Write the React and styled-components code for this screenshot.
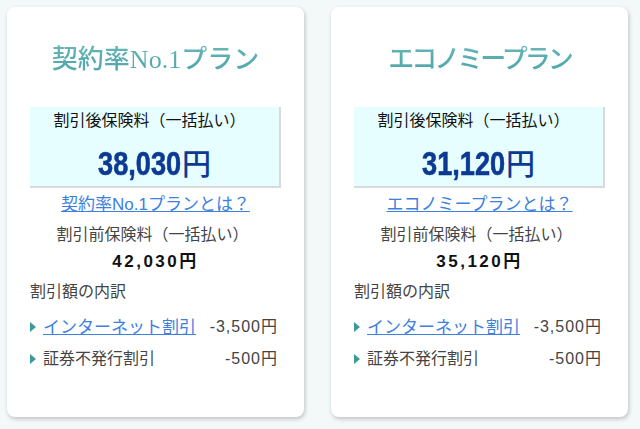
import React from "react";
import styled, { createGlobalStyle } from "styled-components";

const GlobalStyle = createGlobalStyle`
    body {
        margin: 0;
        background: #f3f8f8;
        font-family: "Liberation Sans", "Noto Sans CJK JP", sans-serif;
    }
`

const Page = styled.div`
    display: flex;
    gap: 27px;
    padding: 7px;
`

const Card = styled.div`
    width: 297px;
    height: 410px;
    box-sizing: border-box;
    padding: 0 23px;
    background: #fff;
    border-radius: 8px;
    box-shadow: 1px 2px 4px rgba(0, 0, 0, 0.22);
    display: flex;
    flex-direction: column;
`

const Title = styled.h2`
    margin: 0;
    padding: 40px 0 34px;
    text-align: center;
    font-family: "Liberation Serif", "Noto Sans CJK JP", serif;
    font-weight: 500;
    font-size: 26px;
    line-height: 26px;
    letter-spacing: ${(p) => (p.$tight ? "-3px" : "0")};
    background: linear-gradient(180deg, #9ad6d6 0%, #5aadb0 50%, #3f9a9e 100%);
    -webkit-background-clip: text;
    background-clip: text;
    color: transparent;
`

const PriceBox = styled.div`
    background: #e6feff;
    border-right: 2px solid #dadada;
    border-bottom: 2px solid #dadada;
    padding: 2px 0 6px;
    text-align: center;
`

const BoxLabel = styled.div`
    font-size: 16px;
    line-height: 24px;
    color: #111;
    padding-right: 10px;
`

const Price = styled.div`
    margin-top: 11px;
    height: 36px;
    display: flex;
    justify-content: center;
    align-items: baseline;
    color: #0c3a92;
`

// narrow, heavy figures: squeeze regular bold digits
const Digits = styled.span`
    display: inline-block;
    font-family: "Liberation Sans", sans-serif;
    font-weight: 700;
    font-size: 34px;
    line-height: 36px;
    -webkit-text-stroke: 0.6px #0c3a92;
    transform: scaleX(0.8);
    transform-origin: left center;
    margin-right: -20px;
`

const Yen = styled.span`
    font-family: "Noto Sans CJK JP", sans-serif;
    font-weight: 500;
    font-size: 29px;
    line-height: 36px;
`

const PlanLink = styled.a`
    display: block;
    margin-top: 2px;
    text-align: center;
    font-size: 17px;
    line-height: 30px;
    color: #3d80e0;
    text-decoration: underline;
`

const Label = styled.div`
    text-align: center;
    font-size: 16px;
    line-height: 30px;
    color: #444;
    padding-right: 6px;
`

const Regular = styled.div`
    text-align: center;
    font-weight: 700;
    font-size: 17px;
    letter-spacing: 2.5px;
    line-height: 24px;
    color: #111;
`

const Section = styled.div`
    margin-top: 3px;
    font-size: 16px;
    line-height: 30px;
    color: #444;
`

const Rows = styled.div`
    margin-top: 2px;
`

const Row = styled.div`
    display: flex;
    align-items: center;
    height: 32px;
    padding-right: 3px;
`

const Marker = styled.span`
    width: 0;
    height: 0;
    border-left: 6px solid #3a9a9a;
    border-top: 5px solid transparent;
    border-bottom: 5px solid transparent;
    margin-right: 7px;
    margin-top: 3px;
`

const RowName = styled.a`
    flex: 1;
    font-size: ${(p) => (p.$link ? "17px" : "16px")};
    color: ${(p) => (p.$link ? "#3d80e0" : "#444")};
    text-decoration: ${(p) => (p.$link ? "underline" : "none")};
`

const Amount = styled.span`
    font-size: 16px;
    letter-spacing: 1px;
    color: #444;
`

const plans = [
    { name: "契約率No.1プラン", tight: false, price: "38,030", regular: "42,030円" },
    { name: "エコノミープラン", tight: true, price: "31,120", regular: "35,120円" },
]

function PlanCard({ plan }) {
    return (
        <Card>
            <Title $tight={plan.tight}>{plan.name}</Title>
            <PriceBox>
                <BoxLabel>割引後保険料（一括払い）</BoxLabel>
                <Price>
                    <Digits>{plan.price}</Digits>
                    <Yen>円</Yen>
                </Price>
            </PriceBox>
            <PlanLink href="#">{plan.name}とは？</PlanLink>
            <Label>割引前保険料（一括払い）</Label>
            <Regular>{plan.regular}</Regular>
            <Section>割引額の内訳</Section>
            <Rows>
                <Row>
                    <Marker />
                    <RowName $link href="#">インターネット割引</RowName>
                    <Amount>-3,500円</Amount>
                </Row>
                <Row>
                    <Marker />
                    <RowName as="span">証券不発行割引</RowName>
                    <Amount>-500円</Amount>
                </Row>
            </Rows>
        </Card>
    )
}

export default function App() {
    return (
        <>
            <GlobalStyle />
            <Page>
                {plans.map((p) => (
                    <PlanCard key={p.name} plan={p} />
                ))}
            </Page>
        </>
    )
}
